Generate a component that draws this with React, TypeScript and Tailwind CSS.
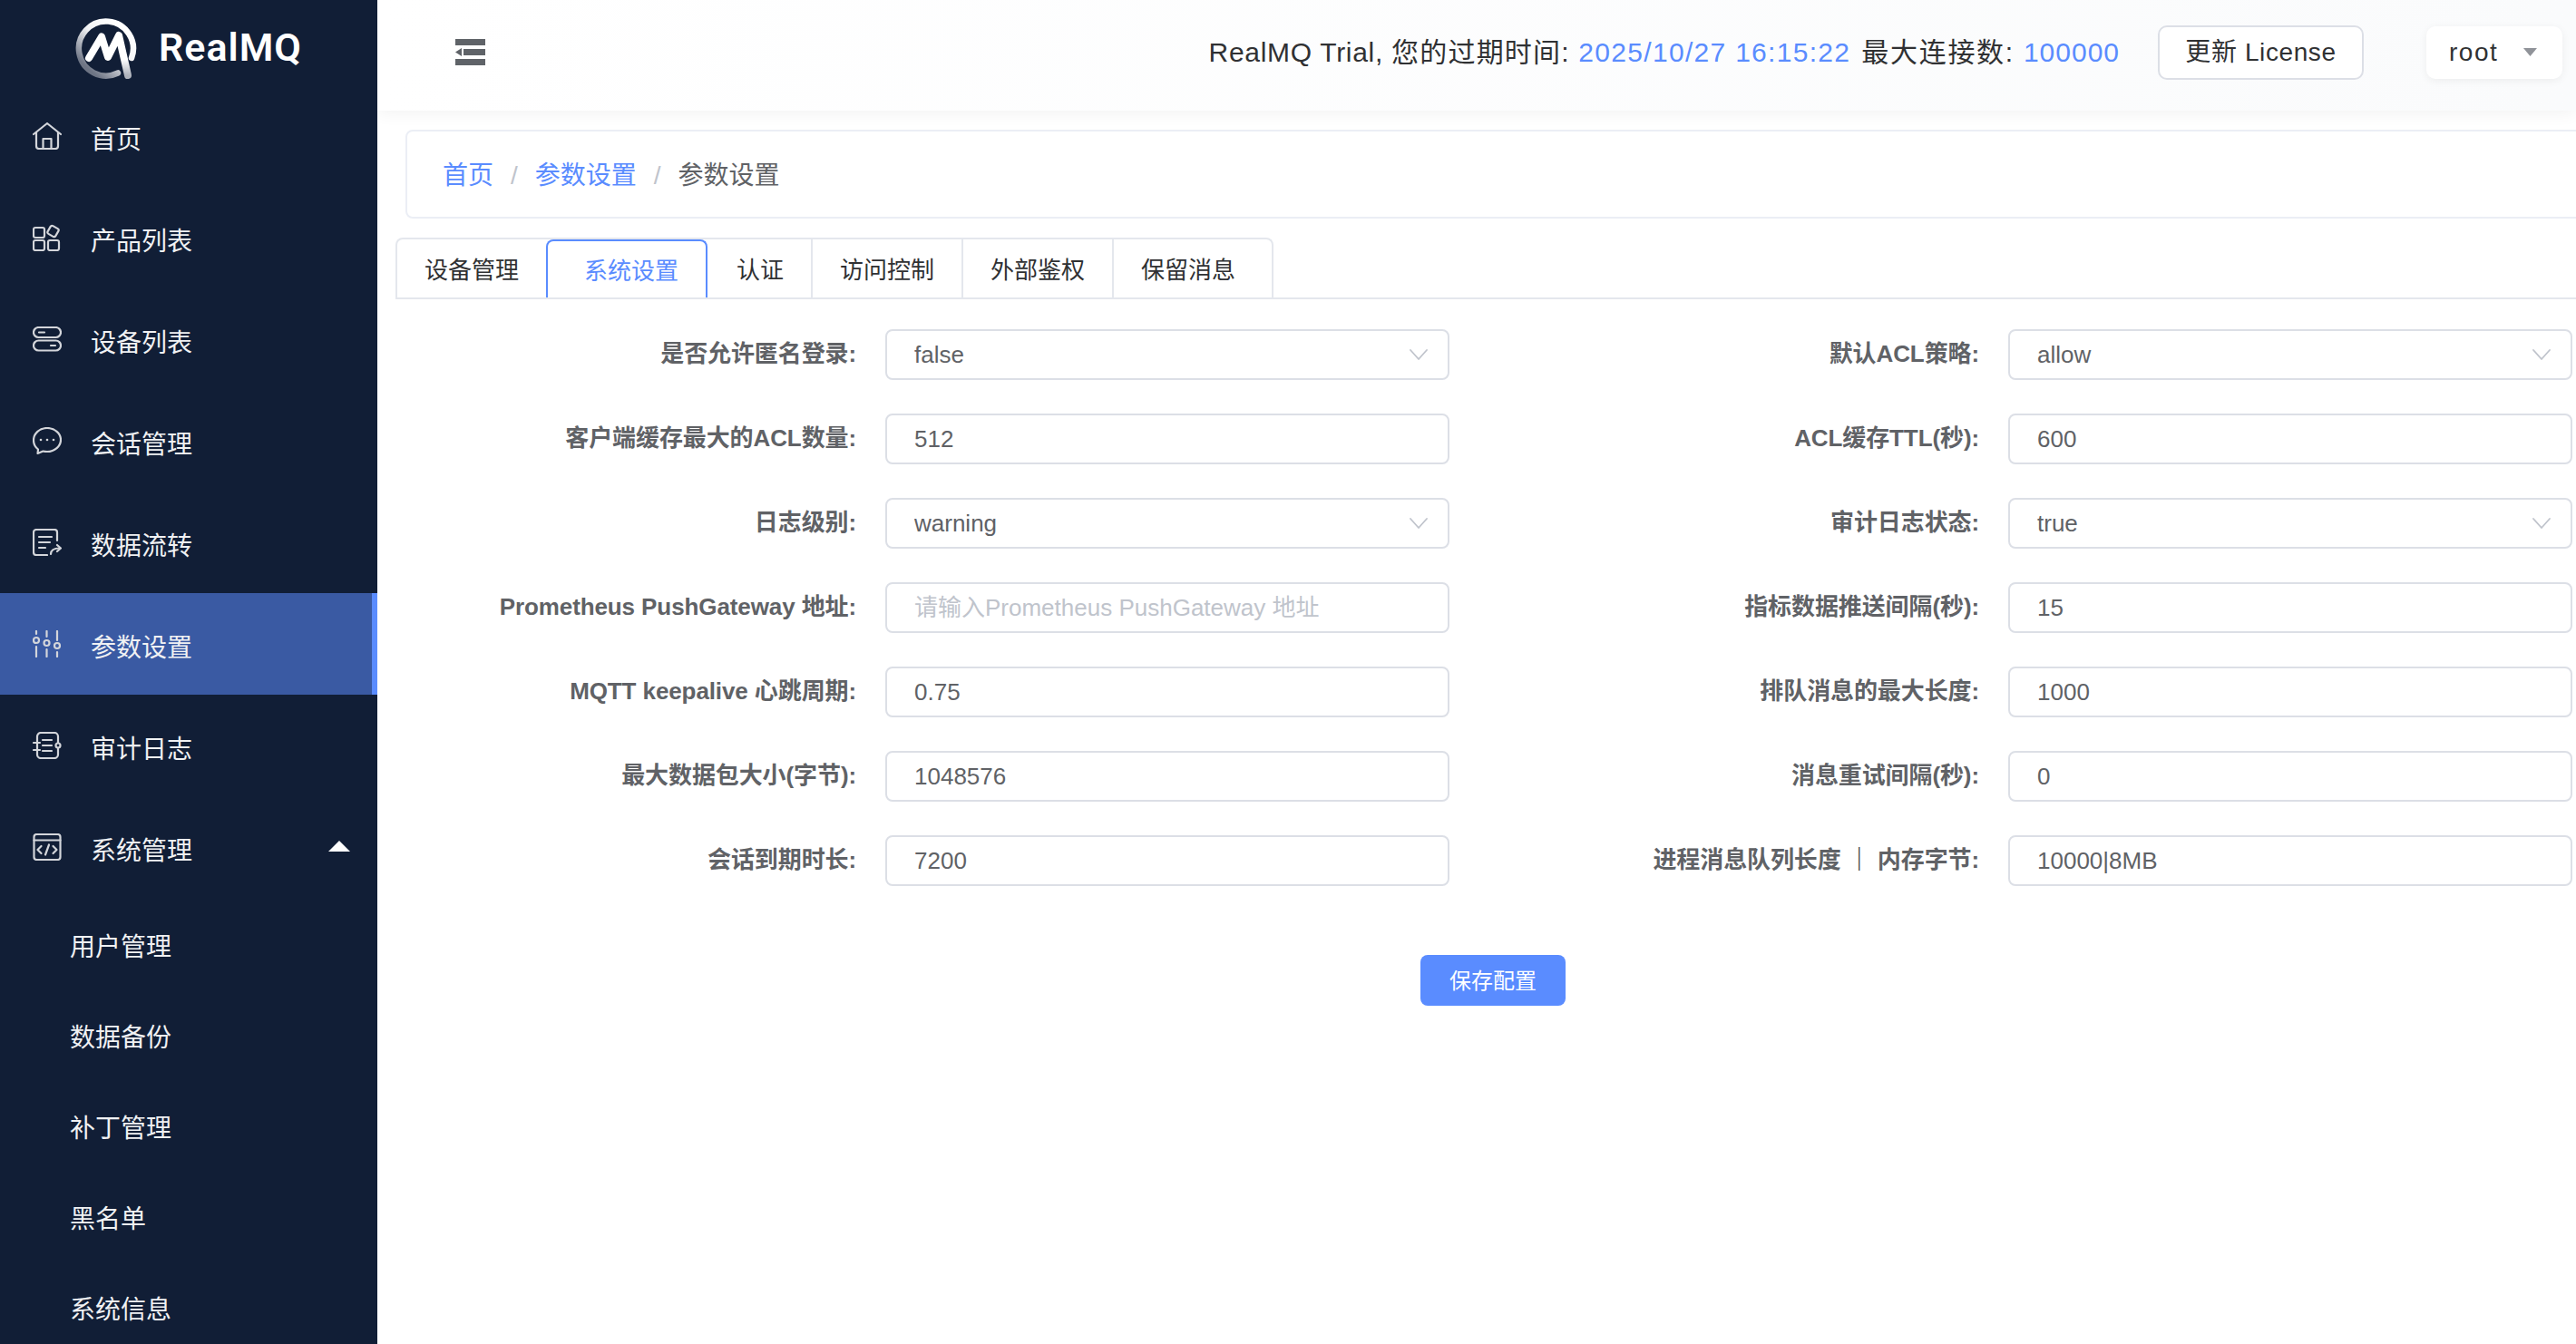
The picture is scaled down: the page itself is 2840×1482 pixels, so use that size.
import type { ReactNode } from 'react';

// sidebar icons, all hand drawn because the originals are custom glyphs
const Icon = ({ children, w = 32, h = 30 }: { children: ReactNode; w?: number; h?: number }) => (
  <svg width={w} height={h} viewBox={`0 0 ${w} ${h}`} fill="none" stroke="#d3d5da" strokeWidth="2.2" strokeLinecap="round" strokeLinejoin="round">
    {children}
  </svg>
);

const HomeIcon = () => (
  <Icon>
    <path d="M1 13L16 1l15 12" />
    <path d="M4 11v15a3 3 0 0 0 3 3h18a3 3 0 0 0 3-3V11" />
    <path d="M11.500 29V18h9v11" />
  </Icon>
);

const ProductIcon = () => (
  <Icon>
    <rect x="1" y="4" width="12" height="11" rx="2" />
    <rect x="1" y="18" width="12" height="11" rx="2" />
    <rect x="17" y="18" width="12" height="11" rx="2" />
    <rect x="17.500" y="3" width="10" height="10" rx="2" transform="rotate(30 22.500 8)" />
  </Icon>
);

const DeviceIcon = () => (
  <Icon h={28}>
    <rect x="1" y="1" width="30" height="11" rx="5.500" />
    <rect x="1" y="15.500" width="30" height="11" rx="5.500" />
    <path d="M7 6.500h6M20 21h5" />
  </Icon>
);

const ChatIcon = () => (
  <Icon>
    <path d="M16 1C7.700 1 1 7 1 14.500c0 4 2 7.600 5 10l-.5 4.500 6-2.500c1.400.4 2.900.5 4.500.5 8.300 0 15-6 15-13S24.300 1 16 1z" />
    <circle cx="9" cy="14" r="1.300" fill="#d3d5da" stroke="none" />
    <circle cx="16" cy="14" r="1.300" fill="#d3d5da" stroke="none" />
    <circle cx="23" cy="14" r="1.300" fill="#d3d5da" stroke="none" />
  </Icon>
);

const DataIcon = () => (
  <Icon>
    <path d="M27 13V4a3 3 0 0 0-3-3H4a3 3 0 0 0-3 3v22a3 3 0 0 0 3 3h12" />
    <path d="M7 9h14M7 15h12M7 21h7" />
    <path d="M20 28c0-4 3-6.500 10-6.500" />
    <path d="M27 18l4 3.500-4 3.500" />
  </Icon>
);

const ParamsIcon = () => (
  <Icon>
    <path d="M4 1v3M4 18v11M15.500 1v6M15.500 21v8M27 1v10M27 24v5" />
    <circle cx="4" cy="11" r="3" />
    <circle cx="15.500" cy="14" r="3" />
    <circle cx="27" cy="17" r="3" />
  </Icon>
);

const AuditIcon = () => (
  <Icon>
    <rect x="5" y="1" width="23" height="28" rx="4" />
    <path d="M1 12h7M1 20h7M11 9h10M11 15h10M11 21h10" />
    <circle cx="28" cy="15" r="2.500" fill="#111e36" />
  </Icon>
);

const SystemIcon = () => (
  <Icon>
    <rect x="1.500" y="1" width="29" height="28" rx="3" />
    <path d="M1.500 7.500h29" />
    <path d="M9.500 14l-4 4 4 4M22.500 14l4 4-4 4M18 12.500l-4 11" />
  </Icon>
);

const Logo = () => (
  <svg width="72" height="72" viewBox="0 0 72 72" fill="none" strokeLinecap="round" strokeLinejoin="round">
    <defs>
      <linearGradient id="ring" x1="0.800" y1="0.100" x2="0.150" y2="0.850">
        <stop offset="0" stopColor="#ffffff" />
        <stop offset="0.450" stopColor="#f2f3f5" />
        <stop offset="1" stopColor="#6d7484" />
      </linearGradient>
      <linearGradient id="leg" x1="0" y1="0" x2="0" y2="1">
        <stop offset="0.600" stopColor="#ffffff" />
        <stop offset="1" stopColor="#aeb2bb" />
      </linearGradient>
    </defs>
    <path d="M49 62.500A30 30 0 1 1 64 46" stroke="url(#ring)" strokeWidth="6.500" />
    <path d="M17 46L31 22.500 38 45 50 21 60 65" stroke="url(#leg)" strokeWidth="8" />
  </svg>
);

const menu = [
  { label: '首页', icon: <HomeIcon /> },
  { label: '产品列表', icon: <ProductIcon /> },
  { label: '设备列表', icon: <DeviceIcon /> },
  { label: '会话管理', icon: <ChatIcon /> },
  { label: '数据流转', icon: <DataIcon /> },
  { label: '参数设置', icon: <ParamsIcon />, active: true },
  { label: '审计日志', icon: <AuditIcon /> },
];

const subMenu = ['用户管理', '数据备份', '补丁管理', '黑名单', '系统信息'];

const Sidebar = () => (
  <aside className="w-[416px] shrink-0 bg-[#111e36] text-[28px] text-[#f0f1f3] overflow-hidden">
    <div className="h-[94px] flex items-center pl-[81px] pt-[14px]">
      <Logo />
      <span className="ml-[22px] -mt-[4px] font-['Roboto',sans-serif] font-semibold text-[43px] leading-none tracking-[1px] text-white">RealMQ</span>
    </div>
    {menu.map((item) => (
      <div
        key={item.label}
        className={`h-[112px] flex items-center pl-[36px] ${item.active ? 'bg-[#3a5aa3] border-r-[6px] border-[#5a8cff]' : ''}`}
      >
        <span className="w-[64px] flex">{item.icon}</span>
        <span className="pt-[9px]">{item.label}</span>
      </div>
    ))}
    <div className="h-[112px] flex items-center pl-[36px] pr-[30px]">
      <span className="w-[64px] flex"><SystemIcon /></span>
      <span className="flex-1 pt-[9px]">系统管理</span>
      <svg width="24" height="12" viewBox="0 0 24 12" className="-mt-[2px]"><path d="M12 0l12 12H0z" fill="#fff" /></svg>
    </div>
    <div className="pt-[3px]">
      {subMenu.map((label) => (
        <div key={label} className="h-[100px] flex items-center pl-[77px] pt-[4px]">{label}</div>
      ))}
    </div>
  </aside>
);

const Header = () => (
  <header className="relative z-10 h-[122px] shrink-0 flex items-center pl-[86px] pb-[7px] bg-gradient-to-r from-white to-[#fafbfc] shadow-[0_2px_18px_rgba(0,0,0,0.06)]">
    <svg width="33" height="29" viewBox="0 0 33 29" fill="#5f6368">
      <rect x="0" y="0" width="33" height="7" />
      <rect x="9" y="11" width="24" height="7" />
      <path d="M7 10v9l-7-4.500z" />
      <rect x="0" y="22" width="33" height="7" />
    </svg>
    <div className="ml-auto flex items-center text-[30px] text-[#303133]">
      <span className="whitespace-pre tracking-[0.7px]">RealMQ Trial, </span>
      <span className="whitespace-pre tracking-[1.2px]">您的过期时间: </span>
      <span className="tracking-[1.3px] text-[#5a8cff]">2025/10/27 16:15:22</span>
      <span className="whitespace-pre ml-[12px] tracking-[1.7px]">最大连接数: </span>
      <span className="tracking-[1px] text-[#5a8cff]">100000</span>
    </div>
    <button className="ml-[42px] h-[60px] w-[227px] rounded-[10px] border-2 border-[#dcdfe6] bg-white text-[28px] tracking-[0.6px] text-[#303133]">
      更新 License
    </button>
    <div className="ml-[69px] mr-[15px] h-[58px] w-[150px] rounded-[10px] bg-white shadow-[0_2px_10px_rgba(0,0,0,0.06)] flex items-center pl-[25px] text-[28px] tracking-[1.5px] text-[#303133]">
      root
      <svg width="15" height="9" viewBox="0 0 15 9" className="ml-[28px]"><path d="M0 0h15l-7.500 9z" fill="#909399" /></svg>
    </div>
  </header>
);

const Breadcrumb = () => (
  <nav className="mt-[21px] ml-[31px] w-[2420px] h-[98px] shrink-0 flex items-center pl-[39px] pt-[3px] border-2 border-[#ebeef5] rounded-lg text-[28px]">
    <span className="text-[#5a8cff]">首页</span>
    <span className="mx-[19px] text-[#c0c4cc]">/</span>
    <span className="text-[#5a8cff]">参数设置</span>
    <span className="mx-[19px] text-[#c0c4cc]">/</span>
    <span className="text-[#606266]">参数设置</span>
  </nav>
);

const Tabs = () => (
  <div className="mt-[21px] ml-[20px] h-[68px] shrink-0 border-b-2 border-[#e4e7ed]">
    <div className="inline-flex h-[66px] items-stretch border-2 border-b-0 border-[#e4e7ed] rounded-t-lg text-[26px] text-[#303133]">
      <div className="flex items-center pl-[30px] pr-[30px] pt-[4px]">设备管理</div>
      <div className="flex items-center pl-[40px] pr-[30px] pt-[4px] border-2 border-b-0 border-[#5a8cff] rounded-t-lg text-[#5a8cff]">系统设置</div>
      <div className="flex items-center pl-[32px] pr-[30px] pt-[4px]">认证</div>
      <div className="flex items-center px-[30px] pt-[4px] border-l-2 border-[#e4e7ed]">访问控制</div>
      <div className="flex items-center px-[30px] pt-[4px] border-l-2 border-[#e4e7ed]">外部鉴权</div>
      <div className="flex items-center pl-[30px] pr-[40px] pt-[4px] border-l-2 border-[#e4e7ed]">保留消息</div>
    </div>
  </div>
);

const Chevron = () => (
  <svg width="20" height="12" viewBox="0 0 20 12" fill="none" stroke="#c0c4cc" strokeWidth="1.800" strokeLinecap="round" strokeLinejoin="round">
    <path d="M1 1l9 10 9-10" />
  </svg>
);

type Field = { label: ReactNode; value?: string; placeholder?: string; select?: boolean };

const fields: Field[] = [
  { label: '是否允许匿名登录:', value: 'false', select: true },
  { label: '默认ACL策略:', value: 'allow', select: true },
  { label: '客户端缓存最大的ACL数量:', value: '512' },
  { label: 'ACL缓存TTL(秒):', value: '600' },
  { label: '日志级别:', value: 'warning', select: true },
  { label: '审计日志状态:', value: 'true', select: true },
  { label: 'Prometheus PushGateway 地址:', placeholder: '请输入Prometheus PushGateway 地址' },
  { label: '指标数据推送间隔(秒):', value: '15' },
  { label: 'MQTT keepalive 心跳周期:', value: '0.75' },
  { label: '排队消息的最大长度:', value: '1000' },
  { label: '最大数据包大小(字节):', value: '1048576' },
  { label: '消息重试间隔(秒):', value: '0' },
  { label: '会话到期时长:', value: '7200' },
  { label: <>进程消息队列长度 <span className="text-[#303133]">｜</span> 内存字节:</>, value: '10000|8MB' },
];

const FormRow = ({ field }: { field: Field }) => (
  <div className="flex items-center h-[56px] text-[26px]">
    <label className="w-[540px] pr-[32px] text-right font-bold tracking-[-0.1px] text-[#606266] whitespace-pre -mt-[1px]">{field.label}</label>
    <div className="w-[622px] h-[56px] flex items-center border-2 border-[#dcdfe6] rounded-lg bg-white pl-[30px] pr-[22px]">
      <input
        readOnly
        value={field.value ?? ''}
        placeholder={field.placeholder}
        className="flex-1 min-w-0 bg-transparent outline-none text-[#606266] placeholder:text-[#c0c4cc]"
      />
      {field.select && <Chevron />}
    </div>
  </div>
);

export default function App() {
  return (
    <div className="flex h-[1482px] w-full overflow-hidden bg-white font-['Liberation_Sans','Noto_Sans_CJK_SC',sans-serif]">
      <Sidebar />
      <main className="flex-1 min-w-0 flex flex-col overflow-hidden">
        <Header />
        <Breadcrumb />
        <Tabs />
        <div className="ml-[20px] w-[2420px] mt-[33px]">
          <div className="grid grid-cols-[1238px_1182px] gap-y-[37px]">
            {fields.map((f, i) => (
              <FormRow key={i} field={f} />
            ))}
          </div>
          <div className="mt-[76px] flex justify-center">
            <button className="w-[160px] h-[56px] pt-[2px] rounded-lg bg-[#5a8cff] text-[24px] text-white">保存配置</button>
          </div>
        </div>
      </main>
    </div>
  );
}
